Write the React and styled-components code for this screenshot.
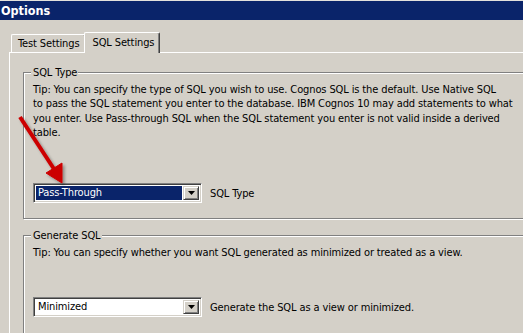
import React from "react";
import styled, { createGlobalStyle } from "styled-components";

const UI_FONT = `"DejaVu Sans Condensed", "Liberation Sans", Arial, sans-serif`;

const GlobalStyle = createGlobalStyle`
  html, body {
    margin: 0;
    padding: 0;
    background: #d4d0c8;
    overflow: hidden;
  }
  body {
    font-family: ${UI_FONT};
    font-size: 11px;
    letter-spacing: -0.12px;
    color: #000;
  }
`;

const Window = styled.div`
  position: relative;
  width: 523px;
  height: 333px;
  overflow: hidden;
  border-top: 1px solid #e4e2dc;
`;

const TitleBar = styled.div`
  height: 19px;
  background: #0a246a;
  color: #fff;
  font-family: ${UI_FONT};
  font-weight: bold;
  font-size: 12.5px;
  letter-spacing: 0;
  line-height: 19px;
  padding-left: 1px;
`;

const TabStrip = styled.div`
  display: flex;
  align-items: flex-end;
  height: 32px;
  padding-left: 11px;
  box-sizing: border-box;
`;

const Tab = styled.div`
  position: relative;
  z-index: ${p => (p.active ? 2 : 1)};
  box-sizing: border-box;
  height: ${p => (p.active ? "21px" : "18px")};
  margin-bottom: ${p => (p.active ? "-1px" : "0")};
  margin-left: ${p => (p.active ? "-2px" : "0")};
  padding: ${p => (p.active ? "3px 5px 0 7px" : "2px 6px 0 6px")};
  background: #d4d0c8;
  border-top: 1px solid #fff;
  border-left: 1px solid #fff;
  border-right: 1px solid #404040;
  box-shadow: inset -1px 0 0 #808080;
  border-radius: 2px 2px 0 0;
  line-height: 14px;
  white-space: nowrap;
`;

const Panel = styled.div`
  margin-left: 9px;
  width: 700px;
  border-top: 1px solid #fff;
  border-left: 1px solid #fff;
  padding-left: 13px;
  padding-top: 19px;
`;

const GroupBox = styled.div`
  position: relative;
  width: 650px;
  margin-bottom: ${p => p.gap || "0"};
  border: 1px solid #808080;
  box-shadow: inset 1px 1px 0 #fff, 1px 1px 0 #fff;
  padding: 10px 0 0 9px;
  height: ${p => p.height};
  box-sizing: border-box;
`;

const GroupLabel = styled.span`
  position: absolute;
  top: -7px;
  left: 7px;
  padding: 0 1px 0 2px;
  background: #d4d0c8;
  line-height: 13px;
`;

const Tip = styled.p`
  margin: 0;
  white-space: nowrap;
  line-height: 14.3px;
`;

const FieldRow = styled.div`
  display: flex;
  align-items: center;
  gap: 8px;
  margin-top: ${p => p.top};
`;

const Combo = styled.div`
  display: flex;
  box-sizing: border-box;
  width: 169px;
  height: 20px;
  border-top: 1px solid #808080;
  border-left: 1px solid #808080;
  border-right: 1px solid #fff;
  border-bottom: 1px solid #fff;
  box-shadow: inset 1px 1px 0 #404040, inset -1px -1px 0 #d4d0c8;
  background: #fff;
  padding: 2px;
`;

const ComboValue = styled.div`
  flex: 1;
  margin-right: 1px;
  padding-left: 2px;
  background: ${p => (p.selected ? "#0a246a" : "#fff")};
  color: ${p => (p.selected ? "#fff" : "#000")};
  line-height: 14px;
`;

const ComboButton = styled.div`
  width: 16px;
  box-sizing: border-box;
  display: flex;
  align-items: center;
  justify-content: center;
  background: #d4d0c8;
  border-top: 1px solid #d4d0c8;
  border-left: 1px solid #d4d0c8;
  border-right: 1px solid #404040;
  border-bottom: 1px solid #404040;
  box-shadow: inset 1px 1px 0 #fff, inset -1px -1px 0 #808080;
`;

const FieldLabel = styled.span``;

const Arrow = styled.svg`
  position: absolute;
  left: 0;
  top: 0;
  pointer-events: none;
`;

const DropArrow = () => (
  <svg width="7" height="4" viewBox="0 0 7 4">
    <path d="M0 0h7L3.5 4z" fill="#000" />
  </svg>
);

const Dropdown = ({ value, selected }) => (
  <Combo>
    <ComboValue selected={selected}>{value}</ComboValue>
    <ComboButton>
      <DropArrow />
    </ComboButton>
  </Combo>
);

export default function App() {
  return (
    <>
      <GlobalStyle />
      <Window>
        <TitleBar>Options</TitleBar>
        <TabStrip>
          <Tab>Test Settings</Tab>
          <Tab active>SQL Settings</Tab>
        </TabStrip>
        <Panel>
          <GroupBox height="147px" gap="16px">
            <GroupLabel>SQL Type</GroupLabel>
            <Tip>
              Tip: You can specify the type of SQL you wish to use. Cognos SQL
              is the default. Use Native SQL
              <br />
              to pass the SQL statement you enter to the database. IBM Cognos
              10 may add statements to what
              <br />
              you enter. Use Pass-through SQL when the SQL statement you enter
              is not valid inside a derived
              <br />
              table.
            </Tip>
            <FieldRow top="43px">
              <Dropdown value="Pass-Through" selected />
              <FieldLabel>SQL Type</FieldLabel>
            </FieldRow>
          </GroupBox>
          <GroupBox height="120px">
            <GroupLabel>Generate SQL</GroupLabel>
            <Tip>
              Tip: You can specify whether you want SQL generated as minimized
              or treated as a view.
            </Tip>
            <FieldRow top="37px">
              <Dropdown value="Minimized" />
              <FieldLabel>Generate the SQL as a view or minimized.</FieldLabel>
            </FieldRow>
          </GroupBox>
        </Panel>
        <Arrow width="90" height="200" viewBox="0 0 90 200">
          <defs>
            <filter id="sh" x="-50%" y="-50%" width="200%" height="200%">
              <feGaussianBlur in="SourceAlpha" stdDeviation="1.5" />
              <feOffset dx="2" dy="2" />
              <feComponentTransfer>
                <feFuncA type="linear" slope="0.35" />
              </feComponentTransfer>
              <feMerge>
                <feMergeNode />
                <feMergeNode in="SourceGraphic" />
              </feMerge>
            </filter>
          </defs>
          <g filter="url(#sh)" fill="#cc0000" stroke="#cc0000">
            <line x1="20" y1="116" x2="54" y2="168" strokeWidth="4" />
            <path d="M62 182 L46 172 L62 162 Z" strokeWidth="1" strokeLinejoin="round" />
          </g>
        </Arrow>
      </Window>
    </>
  );
}
